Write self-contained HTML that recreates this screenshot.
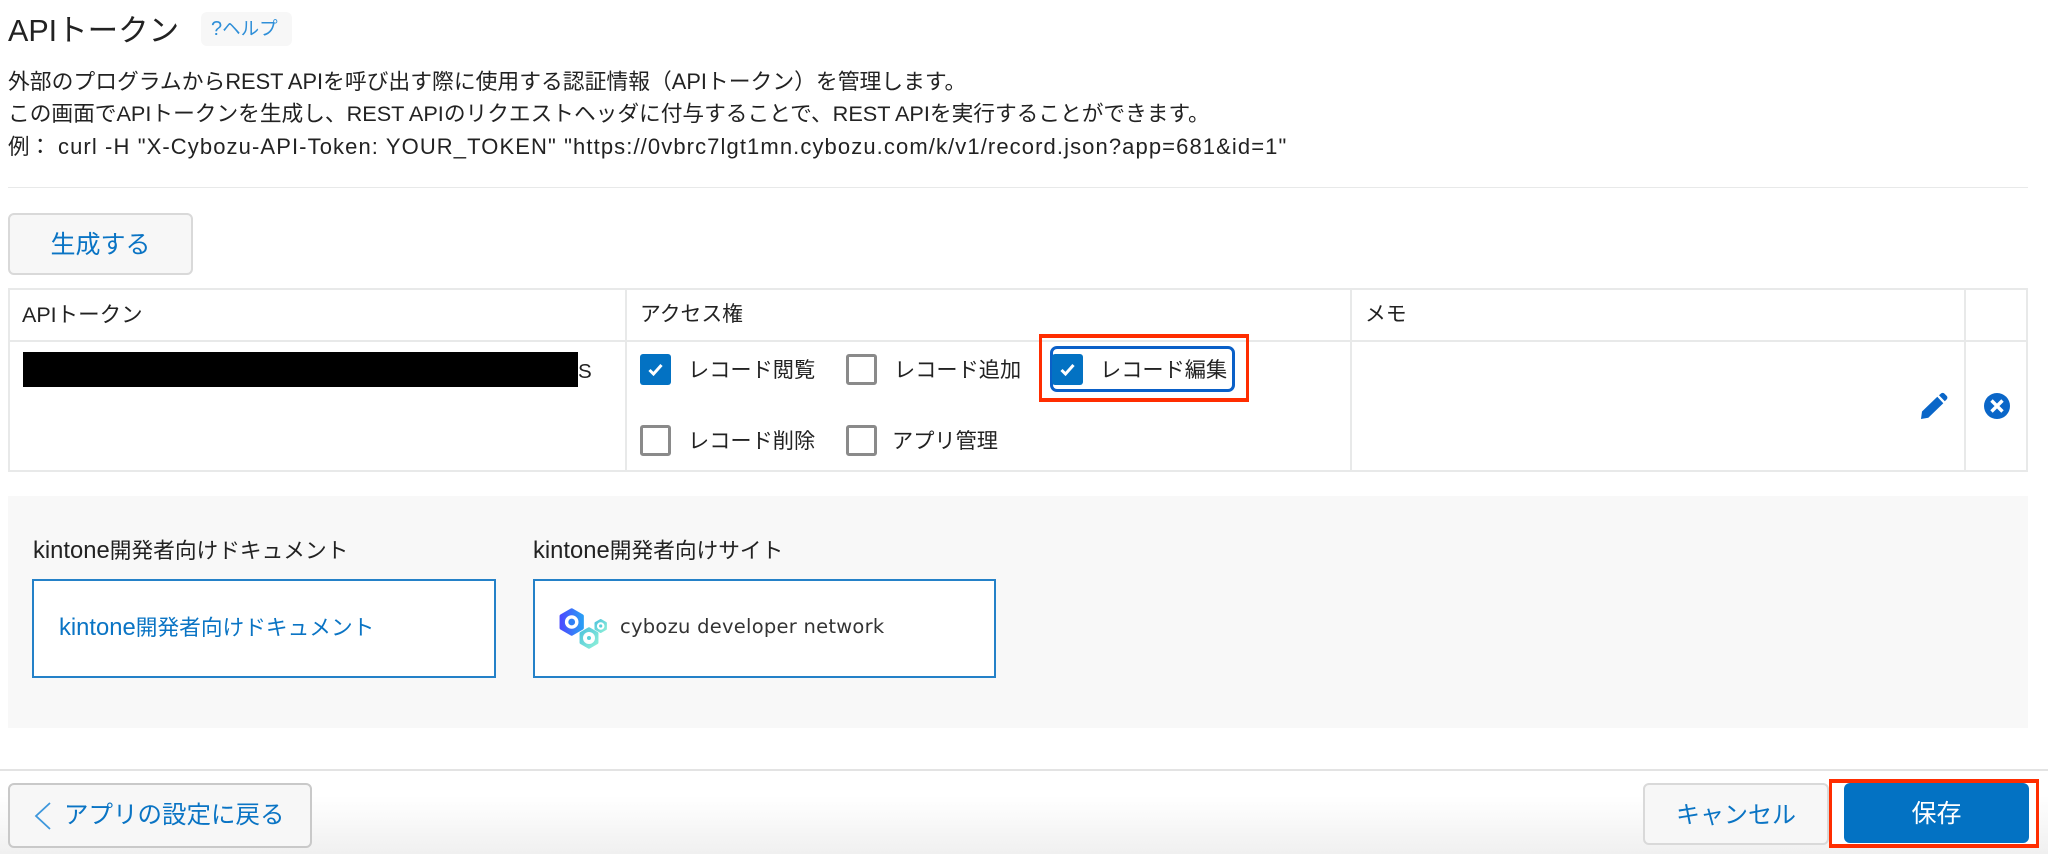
<!DOCTYPE html>
<html lang="ja">
<head>
<meta charset="utf-8">
<title>APIトークン</title>
<style>
html,body{margin:0;padding:0;background:#fff}
body{position:relative;width:2048px;height:854px;overflow:hidden;font-family:"Liberation Sans","Noto Sans CJK JP",sans-serif;color:#222;font-size:21px}
.a{position:absolute;box-sizing:border-box}
.t{position:absolute;white-space:nowrap;line-height:32px;height:32px}
.k{font-size:23.800px}
.cb{position:absolute;box-sizing:border-box;width:31px;height:31px;border-radius:3px;border:3px solid #8a8a8a;background:#fff}
.cb.on{border:0;background:#0372c3}
.cb svg{position:absolute;left:0;top:0}
.l{background:#e8e9e9}
.btn{position:absolute;box-sizing:border-box;border:2px solid #d9d9d9;border-radius:6px;background:#f7f7f7;color:#0a74c4;text-align:center;white-space:nowrap}
.box{position:absolute;box-sizing:border-box;background:#fff;border:2px solid #2481c8}
.red{position:absolute;box-sizing:border-box;border-style:solid;border-color:#ff2d00;border-width:4px 3px}
</style>
</head>
<body>
<!-- header -->
<div class="t" style="left:8px;top:15px;font-size:30.500px">APIトークン</div>
<div class="a" style="left:201px;top:12px;width:91px;height:34px;background:#f7f7f7;border-radius:6px"></div>
<div class="t" style="left:211px;top:13px;color:#2f8fd8;font-size:18.500px"><span style="font-size:20px">?</span>ヘルプ</div>

<div class="t" style="left:8px;top:66px;font-size:21.800px">外部のプログラムからREST APIを呼び出す際に使用する認証情報（APIトークン）を管理します。</div>
<div class="t" style="left:8px;top:98px;font-size:21.700px">この画面でAPIトークンを生成し、REST APIのリクエストヘッダに付与することで、REST APIを実行することができます。</div>
<div class="t" style="left:8px;top:131px;font-size:21.500px">例：</div>
<div class="t" style="left:58px;top:131px;font-size:22px;letter-spacing:1.100px">curl -H "X-Cybozu-API-Token: YOUR_TOKEN" "https://0vbrc7lgt1mn.cybozu.com/k/v1/record.json?app=681&amp;id=1"</div>

<div class="a l" style="left:8px;top:187px;width:2020px;height:1px"></div>

<div class="btn" style="left:8px;top:213px;width:185px;height:62px;font-size:25px;line-height:60px">生成する</div>

<!-- table -->
<div class="a" style="left:8px;top:288px;width:2020px;height:184px;border:2px solid #e8e9e9"></div>
<div class="a l" style="left:8px;top:340px;width:2020px;height:2px"></div>
<div class="a l" style="left:625px;top:288px;width:2px;height:184px"></div>
<div class="a l" style="left:1350px;top:288px;width:2px;height:184px"></div>
<div class="a l" style="left:1964px;top:288px;width:2px;height:184px"></div>

<div class="t" style="left:22px;top:299px;font-size:21.500px">APIトークン</div>
<div class="t" style="left:640px;top:299px;font-size:20.800px">アクセス権</div>
<div class="t" style="left:1365px;top:299px;font-size:20.800px">メモ</div>

<div class="a" style="left:23px;top:352px;width:555px;height:35px;background:#000"></div>
<div class="t" style="left:578px;top:356px;font-size:20.600px">S</div>

<!-- focus outline & checkboxes -->
<div class="a" style="left:1050px;top:346px;width:185px;height:46px;border:3px solid #0a60c8;border-radius:7px"></div>

<div class="cb on" style="left:640px;top:354px"><svg width="31" height="31" viewBox="0 0 31 31"><path d="M9.500 16l4 4 8-9" fill="none" stroke="#fff" stroke-width="3"/></svg></div>
<div class="t" style="left:688px;top:355px;font-size:21.200px">レコード閲覧</div>
<div class="cb" style="left:846px;top:354px"></div>
<div class="t" style="left:894px;top:355px;font-size:21.200px">レコード追加</div>
<div class="cb on" style="left:1052px;top:354px"><svg width="31" height="31" viewBox="0 0 31 31"><path d="M9.500 16l4 4 8-9" fill="none" stroke="#fff" stroke-width="3"/></svg></div>
<div class="t" style="left:1100px;top:355px;font-size:21.200px">レコード編集</div>
<div class="cb" style="left:640px;top:425px"></div>
<div class="t" style="left:688px;top:426px;font-size:21.200px">レコード削除</div>
<div class="cb" style="left:846px;top:425px"></div>
<div class="t" style="left:892px;top:426px;font-size:21.200px">アプリ管理</div>

<div class="red" style="left:1039px;top:334px;width:210px;height:68px"></div>

<!-- row icons -->
<svg class="a" style="left:1920px;top:392px" width="28" height="28" viewBox="0 0 28 28"><path d="M1 27l1-7.500L17.300 4.700l6 6.600L8.300 25.700zM19 3.300l2-1.800c1-.8 2.300-.8 3.300 0l2.500 2.500c.8 1 .8 2.300 0 3.300l-2 2z" fill="#0a66c8"/></svg>
<svg class="a" style="left:1984px;top:393px" width="26" height="26" viewBox="0 0 26 26"><circle cx="13" cy="13" r="13" fill="#0a66c8"/><path d="M7.500 7.500l11 11M18.500 7.500l-11 11" stroke="#fff" stroke-width="3.400" fill="none"/></svg>

<!-- links panel -->
<div class="a" style="left:8px;top:496px;width:2020px;height:232px;background:#f8f8f8"></div>
<div class="t" style="left:33px;top:535px;font-size:21.700px"><span class="k">kintone</span>開発者向けドキュメント</div>
<div class="t" style="left:533px;top:535px;font-size:21.700px"><span class="k">kintone</span>開発者向けサイト</div>

<div class="box" style="left:32px;top:579px;width:464px;height:99px"></div>
<div class="t" style="left:59px;top:612px;font-size:21.700px;color:#0a74c4"><span class="k">kintone</span>開発者向けドキュメント</div>

<div class="box" style="left:533px;top:579px;width:463px;height:99px"></div>
<svg class="a" style="left:555px;top:606px" width="62" height="46" viewBox="0 0 62 46">
<defs>
<linearGradient id="g1" x1="0" y1="0" x2="1" y2="0"><stop offset="0" stop-color="#4a4cff"/><stop offset="1" stop-color="#2a9cf5"/></linearGradient>
<linearGradient id="g2" x1="0" y1="0" x2="1" y2="1"><stop offset="0" stop-color="#4fc4dc"/><stop offset="1" stop-color="#8ef0d8"/></linearGradient>
</defs>
<polygon points="16.700,4 27.100,10 27.100,22 16.700,28 6.300,22 6.300,10" fill="url(#g1)" stroke="url(#g1)" stroke-width="3.500" stroke-linejoin="round"/>
<circle cx="16.700" cy="16" r="6.800" fill="#fff"/><circle cx="16.700" cy="16" r="3.400" fill="#2f80f5"/>
<polygon points="34,22.500 42.200,27.200 42.200,36.800 34,41.500 25.800,36.800 25.800,27.200" fill="url(#g2)" stroke="url(#g2)" stroke-width="2.500" stroke-linejoin="round"/>
<circle cx="34" cy="32" r="6" fill="#fff"/><circle cx="34" cy="32" r="2" fill="#58d0d8"/>
<polygon points="45.700,14 50.900,17 50.900,23 45.700,26 40.500,23 40.500,17" fill="url(#g2)" stroke="url(#g2)" stroke-width="2" stroke-linejoin="round"/>
<circle cx="45.700" cy="20" r="3.800" fill="#fff"/><circle cx="45.700" cy="20" r="1.600" fill="#58d0d8"/>
</svg>
<div class="t" style="left:620px;top:611px;font-family:'DejaVu Sans',sans-serif;font-size:19.500px;letter-spacing:.25px;color:#333">cybozu developer network</div>

<!-- footer -->
<div class="a" style="left:0;top:769px;width:2048px;height:85px;border-top:2px solid #e3e3e3;background:linear-gradient(#fff 0,#fff 30%,#f0f0f0 100%)"></div>

<div class="btn" style="left:8px;top:783px;width:304px;height:65px;border-color:#c9c9c9"></div>
<svg class="a" style="left:33px;top:801px" width="20" height="30" viewBox="0 0 20 30"><path d="M17 2L3 15l14 13" fill="none" stroke="#3d97dc" stroke-width="1.800"/></svg>
<div class="t" style="left:64px;top:800px;font-size:24.500px;color:#0a74c4">アプリの設定に戻る</div>

<div class="btn" style="left:1643px;top:783px;width:186px;height:62px;font-size:24px;line-height:61px">キャンセル</div>

<div class="a" style="left:1829px;top:779px;width:210px;height:69px;background:#fff"></div>
<div class="a" style="left:1844px;top:783px;width:185px;height:60px;background:#0372c3;border-radius:6px;color:#fff;font-size:25px;line-height:63px;text-align:center">保存</div>
<div class="red" style="left:1829px;top:779px;width:210px;height:69px"></div>
</body>
</html>
